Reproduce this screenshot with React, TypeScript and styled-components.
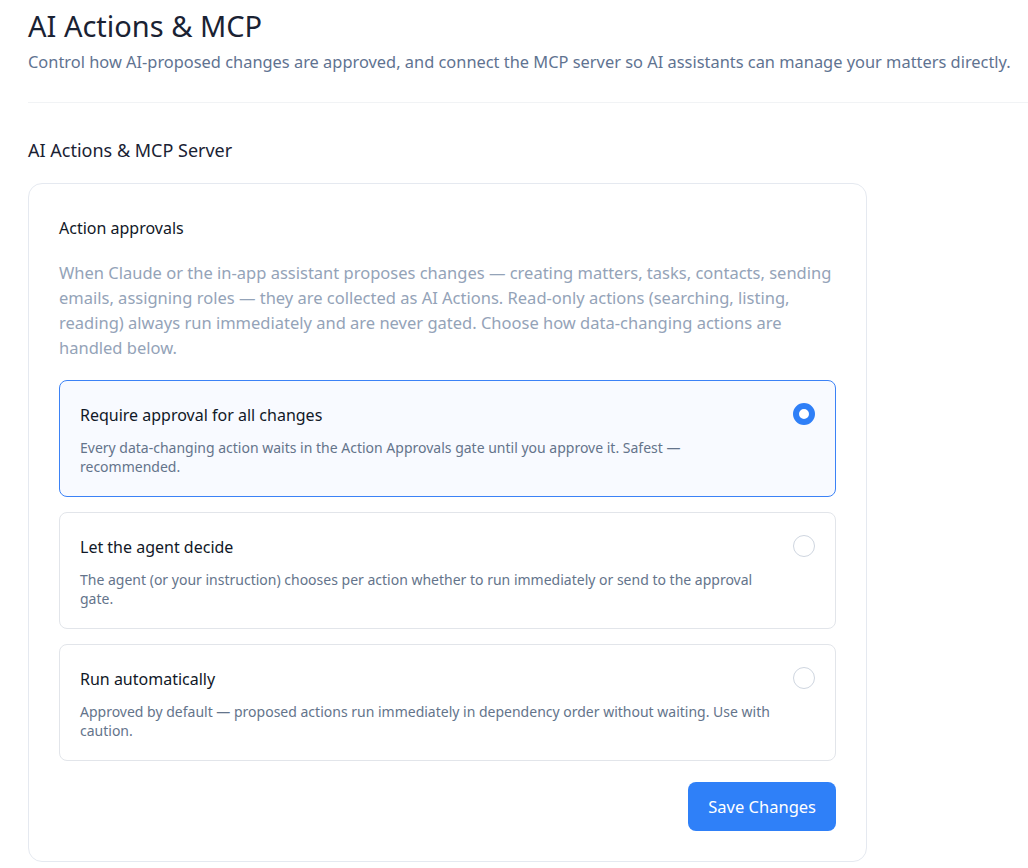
import React, { useState } from 'react';
import styled, { createGlobalStyle } from 'styled-components';

const GlobalStyle = createGlobalStyle`
  html, body {
    margin: 0;
    padding: 0;
    background: #ffffff;
  }
  body {
    font-family: 'Noto Sans', 'Open Sans', Arial, sans-serif;
    color: #1e293b;
    overflow: hidden;
  }
  * {
    box-sizing: border-box;
  }
`;

const s = {
  Page: styled.div`
    padding: 6px 0 0 28px;
    width: 1028px;
  `,
  Header: styled.header`
    padding-bottom: 27px;
    border-bottom: 1px solid #f1f3f5;
  `,
  Title: styled.h1`
    margin: 0;
    font-size: 29px;
    font-weight: 400;
    line-height: 40px;
    color: #1a2233;
  `,
  Subtitle: styled.p`
    margin: 3px 0 0;
    font-size: 16.4px;
    line-height: 26px;
    color: #5f7391;
    white-space: nowrap;
  `,
  SectionTitle: styled.h2`
    margin: 34px 0 20px;
    font-size: 18px;
    font-weight: 400;
    line-height: 26px;
    color: #1a2233;
  `,
  Card: styled.section`
    width: 839px;
    border: 1px solid #e5e9f0;
    border-radius: 14px;
    padding: 30px;
    display: flex;
    flex-direction: column;
  `,
  CardTitle: styled.h3`
    margin: 0;
    font-size: 16px;
    font-weight: 400;
    line-height: 28px;
    color: #111827;
  `,
  CardText: styled.p`
    margin: 18px 0 20px;
    font-size: 16.5px;
    line-height: 25px;
    color: #94a3b8;
  `,
  Options: styled.div`
    display: flex;
    flex-direction: column;
    gap: 15px;
  `,
  Option: styled.label<{ $active: boolean }>`
    display: flex;
    align-items: flex-start;
    gap: 16px;
    min-height: 116px;
    padding: 20px;
    border: 1px solid ${(p) => (p.$active ? '#3b82f6' : '#e2e5ea')};
    border-radius: 8px;
    background: ${(p) => (p.$active ? '#f8faff' : '#ffffff')};
    cursor: pointer;
  `,
  OptionBody: styled.div`
    flex: 1;
    display: flex;
    flex-direction: column;
  `,
  OptionTitle: styled.div`
    font-size: 16px;
    line-height: 28px;
    color: #111827;
  `,
  OptionText: styled.div`
    margin-top: 9px;
    font-size: 14px;
    line-height: 19px;
    color: #64748b;
  `,
  Radio: styled.span<{ $checked: boolean }>`
    flex: none;
    width: 22px;
    height: 22px;
    margin-top: 2px;
    border-radius: 50%;
    border: ${(p) => (p.$checked ? '6px solid #2f7ff7' : '1px solid #cfd6e0')};
    background: #ffffff;
  `,
  Footer: styled.div`
    display: flex;
    justify-content: flex-end;
    margin-top: 21px;
  `,
  SaveBtn: styled.button`
    height: 49px;
    padding: 0 20px;
    border: none;
    border-radius: 8px;
    background: #2f80f8;
    color: #ffffff;
    font-family: inherit;
    font-size: 16.5px;
    cursor: pointer;
  `,
};

const options = [
  {
    id: 'all',
    title: 'Require approval for all changes',
    text: 'Every data-changing action waits in the Action Approvals gate until you approve it. Safest — recommended.',
  },
  {
    id: 'agent',
    title: 'Let the agent decide',
    text: 'The agent (or your instruction) chooses per action whether to run immediately or send to the approval gate.',
  },
  {
    id: 'auto',
    title: 'Run automatically',
    text: 'Approved by default — proposed actions run immediately in dependency order without waiting. Use with caution.',
  },
];

const App = (): JSX.Element => {
  const [mode, setMode] = useState('all');

  return (
    <>
      <GlobalStyle />
      <s.Page>
        <s.Header>
          <s.Title children="AI Actions & MCP" />
          <s.Subtitle children="Control how AI-proposed changes are approved, and connect the MCP server so AI assistants can manage your matters directly." />
        </s.Header>
        <s.SectionTitle children="AI Actions & MCP Server" />
        <s.Card>
          <s.CardTitle children="Action approvals" />
          <s.CardText children="When Claude or the in-app assistant proposes changes — creating matters, tasks, contacts, sending emails, assigning roles — they are collected as AI Actions. Read-only actions (searching, listing, reading) always run immediately and are never gated. Choose how data-changing actions are handled below." />
          <s.Options>
            {options.map((opt) => (
              <s.Option key={opt.id} $active={mode === opt.id} onClick={() => setMode(opt.id)}>
                <s.OptionBody>
                  <s.OptionTitle children={opt.title} />
                  <s.OptionText children={opt.text} />
                </s.OptionBody>
                <s.Radio $checked={mode === opt.id} />
              </s.Option>
            ))}
          </s.Options>
          <s.Footer>
            <s.SaveBtn children="Save Changes" />
          </s.Footer>
        </s.Card>
      </s.Page>
    </>
  );
};

export default App;
